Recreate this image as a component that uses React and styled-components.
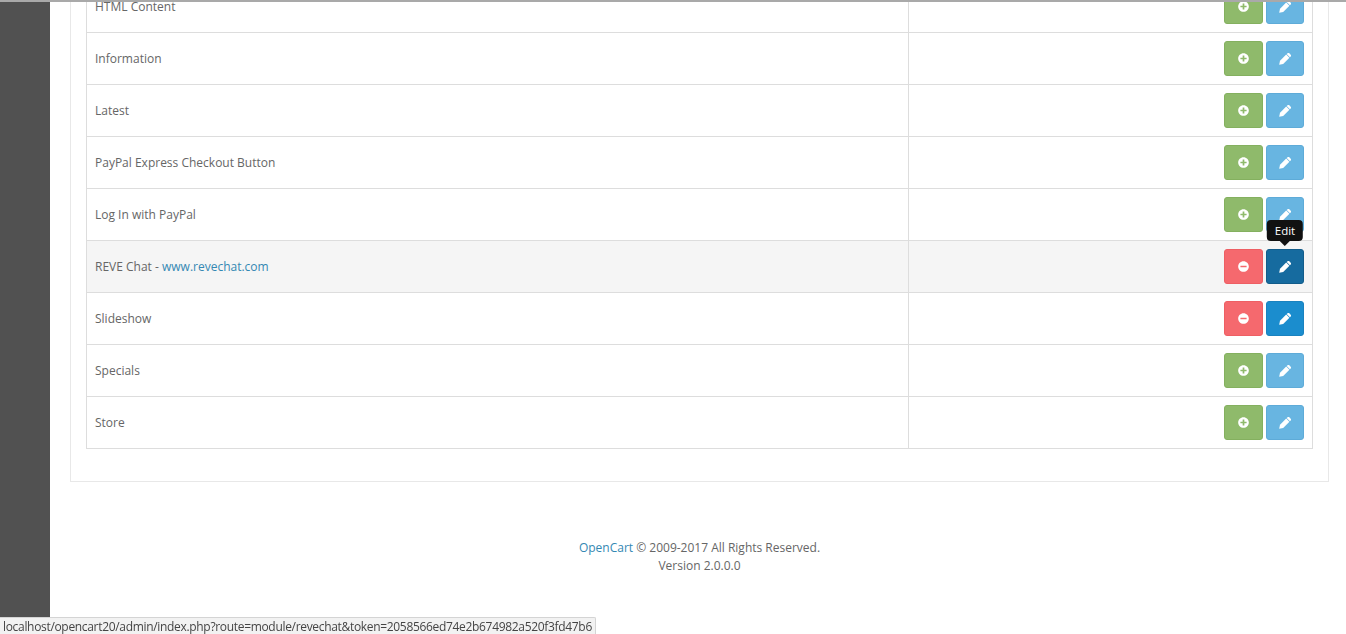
import React from "react";
import styled, { createGlobalStyle } from "styled-components";
import { FaPlusCircle, FaMinusCircle } from "react-icons/fa";

const Global = createGlobalStyle`
  html, body {
    margin: 0;
    height: 634px;
    overflow: hidden;
    background: #fff;
    font-family: "Open Sans", "Liberation Sans", sans-serif;
    font-size: 12px;
    color: #666;
  }
`;

const TopRule = styled.div`
  position: relative;
  z-index: 2;
  height: 2px;
  background: #a9a9a9;
`;

const Page = styled.div`
  display: flex;
  height: 632px;
  overflow: hidden;
`;

const Sidebar = styled.aside`
  flex: 0 0 50px;
  background: #515151;
`;

const Content = styled.main`
  flex: 1;
  padding: 0 17px 0 20px;
`;

const Panel = styled.section`
  margin-top: -22px;
  padding: 0 15px 32px;
  border: 1px solid #e8e8e8;
  border-top: 0;
`;

const Table = styled.table`
  width: 1227px;
  table-layout: fixed;
  border-collapse: collapse;
`;

const Row = styled.tr`
  height: 52px;
  background: ${(p) => (p.$hover ? "#f5f5f5" : "#fff")};
`;

const NameCell = styled.td`
  box-sizing: border-box;
  width: 822px;
  padding: 0 8px;
  border: 1px solid #ddd;
`;

const ActionCell = styled.td`
  padding: 0 8px 0 0;
  border: 1px solid #ddd;
`;

const Actions = styled.div`
  display: flex;
  justify-content: flex-end;
  gap: 3px;
`;

const palette = {
  green: ["#8fba6b", "#84b05f"],
  red: ["#f5696e", "#ee5f64"],
  sky: ["#68b5e1", "#5eabd8"],
  blue: ["#1b8dce", "#1a82bf"],
  navy: ["#166b9f", "#125c8a"],
};

const Button = styled.button`
  position: relative;
  display: flex;
  align-items: center;
  justify-content: center;
  width: ${(p) => (p.$wide ? "39px" : "38px")};
  height: 35px;
  padding: 0;
  border: 1px solid ${(p) => palette[p.$tone][1]};
  border-radius: 3px;
  background: ${(p) => palette[p.$tone][0]};
  color: #fff;
  font-size: 11px;
`;

const Tooltip = styled.span`
  position: absolute;
  left: 50%;
  top: -30px;
  transform: translateX(-50%);
  padding: 2px 8px;
  border-radius: 4px;
  background: #111;
  color: #fff;
  font-family: "Open Sans", "Liberation Sans", sans-serif;
  font-size: 11.5px;
  line-height: 17px;
  &::after {
    content: "";
    position: absolute;
    left: 50%;
    bottom: -5px;
    margin-left: -5px;
    border-style: solid;
    border-width: 5px 5px 0;
    border-color: #111 transparent transparent;
  }
`;

const Link = styled.a`
  color: #3488b3;
  text-decoration: none;
`;

const Footer = styled.footer`
  padding-top: 57px;
  text-align: center;
  line-height: 18px;
`;

const StatusBar = styled.div`
  position: fixed;
  left: 0;
  bottom: 0;
  width: 592px;
  height: 16px;
  padding-left: 3px;
  border: 1px solid #d4d4d4;
  border-left: 0;
  border-bottom: 0;
  border-top-right-radius: 2px;
  background: #f2f2f2;
  color: #444;
  font-size: 12px;
  letter-spacing: -0.32px;
  line-height: 17px;
  white-space: nowrap;
`;

// chunky solid pencil, the icon font one has no inner lines
const PencilIcon = () => (
  <svg width="12" height="12" viewBox="0 0 12 12" fill="currentColor" aria-hidden="true">
    <path d="M.2 11.8 1 7.8l6.2-6.2 3.2 3.2-6.2 6.2z" />
    <path d="M7.7 1.1 8.6.3c.5-.5 1.2-.5 1.7 0l1.4 1.4c.5.5.5 1.2 0 1.7l-.8.9z" />
  </svg>
);

const modules = [
  { name: "HTML Content" },
  { name: "Information" },
  { name: "Latest" },
  { name: "PayPal Express Checkout Button" },
  { name: "Log In with PayPal" },
  { name: "REVE Chat - ", link: "www.revechat.com", installed: true, hover: true },
  { name: "Slideshow", installed: true },
  { name: "Specials" },
  { name: "Store" },
];

function App() {
  return (
    <>
      <Global />
      <TopRule />
      <Page>
        <Sidebar />
        <Content>
          <Panel>
            <Table>
              <tbody>
                {modules.map((m) => (
                  <Row key={m.name} $hover={m.hover}>
                    <NameCell>
                      {m.name}
                      {m.link && <Link href="#">{m.link}</Link>}
                    </NameCell>
                    <ActionCell>
                      <Actions>
                        <Button $wide $tone={m.installed ? "red" : "green"}>
                          {m.installed ? <FaMinusCircle /> : <FaPlusCircle />}
                        </Button>
                        <Button $tone={m.hover ? "navy" : m.installed ? "blue" : "sky"}>
                          <PencilIcon />
                          {m.hover && <Tooltip>Edit</Tooltip>}
                        </Button>
                      </Actions>
                    </ActionCell>
                  </Row>
                ))}
              </tbody>
            </Table>
          </Panel>
          <Footer>
            <Link href="#">OpenCart</Link> © 2009-2017 All Rights Reserved.
            <br />
            Version 2.0.0.0
          </Footer>
        </Content>
      </Page>
      <StatusBar>localhost/opencart20/admin/index.php?route=module/revechat&amp;token=2058566ed74e2b674982a520f3fd47b6</StatusBar>
    </>
  );
}

export default App;
